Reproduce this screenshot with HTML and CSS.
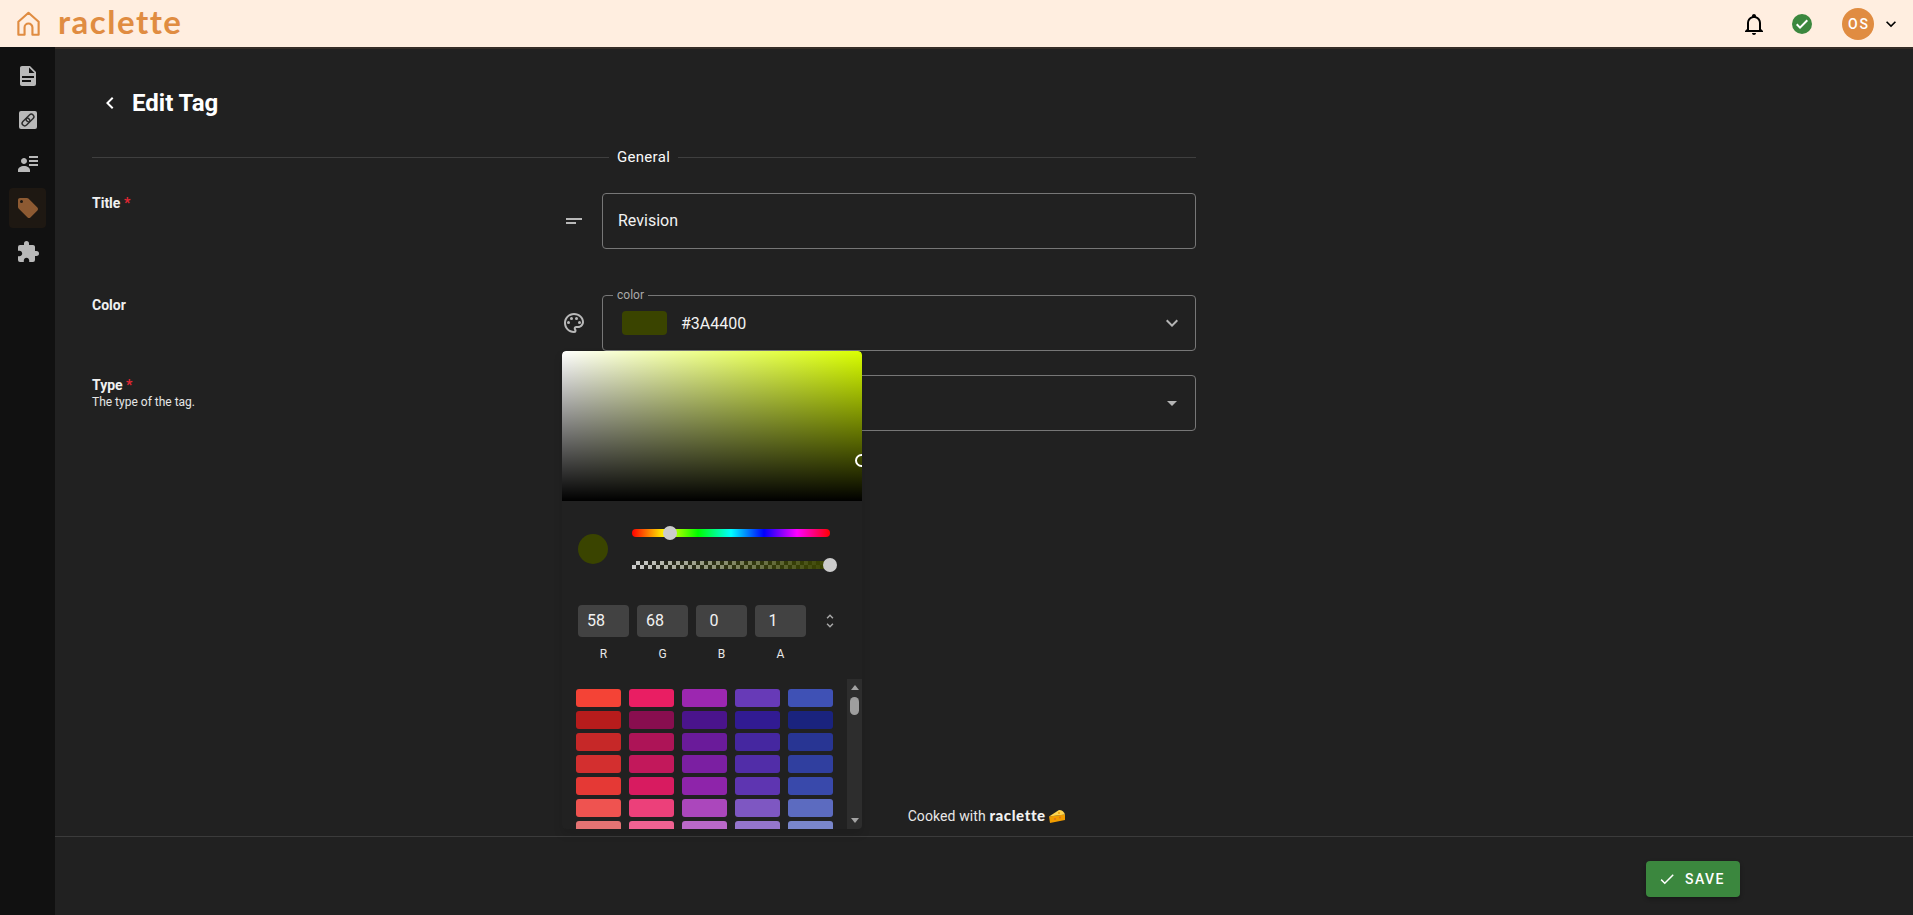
FILE: index.html
```html
<!DOCTYPE html>
<html>
<head>
    <meta charset="utf-8">
    <link rel="stylesheet" href="styles.css">
    <title>Edit Tag</title>
</head>
<body>
    <header class="topbar">
        <svg class="home-icon" viewBox="0 0 24 24"><path d="M3 22V10.500L12 2.500L21 10.500V22H15.500V15.500a3.500 3.500 0 0 0 -7 0V22Z"/></svg>
        <span class="logo">raclette</span>
        <div class="topbar-right">
            <svg class="icon bell" viewBox="0 0 24 24"><path d="M10 21H14C14 22.1 13.1 23 12 23S10 22.1 10 21M21 19V20H3V19L5 17V11C5 7.9 7 5.2 10 4.3V4C10 2.9 10.9 2 12 2S14 2.9 14 4V4.3C17 5.2 19 7.9 19 11V17L21 19M17 11C17 8.2 14.8 6 12 6S7 8.2 7 11V18H17V11Z"/></svg>
            <svg class="icon status" viewBox="0 0 24 24"><circle cx="12" cy="12" r="10" fill="#3b873e"/><path fill="#fff" d="M10 17L6 13L7.41 11.59L10 14.17L16.59 7.58L18 9L10 17Z"/></svg>
            <div class="avatar">OS</div>
            <svg class="icon caret" viewBox="0 0 24 24"><path d="M7.41,8.58L12,13.17L16.59,8.58L18,10L12,16L6,10L7.41,8.58Z"/></svg>
        </div>
    </header>

    <div class="shell">
        <nav class="sidebar">
            <a class="nav-item"><svg class="icon" viewBox="0 0 24 24"><path d="M13,9H18.5L13,3.5V9M6,2H14L20,8V20A2,2 0 0,1 18,22H6C4.89,22 4,21.1 4,20V4C4,2.89 4.89,2 6,2M15,18V16H6V18H15M18,14V12H6V14H18Z"/></svg></a>
            <a class="nav-item"><svg class="icon" viewBox="0 0 24 24"><path d="M5 3H19A2 2 0 0 1 21 5V19A2 2 0 0 1 19 21H5A2 2 0 0 1 3 19V5A2 2 0 0 1 5 3Z"/><g fill="none" stroke="#2a2a2a" stroke-width="1.4"><rect x="11.400" y="5.600" width="5.200" height="8.800" rx="2.600" transform="rotate(45 14 10)"/><rect x="7.400" y="9.600" width="5.200" height="8.800" rx="2.600" transform="rotate(45 10 14)"/></g></svg></a>
            <a class="nav-item"><svg class="icon" viewBox="0 0 24 24"><path d="M11 9C11 10.66 9.66 12 8 12C6.34 12 5 10.66 5 9C5 7.34 6.34 6 8 6C9.66 6 11 7.34 11 9M14 20H2V18C2 15.79 4.69 14 8 14C11.31 14 14 15.79 14 18M22 12V14H13V12M22 8V10H13V8M22 4V6H13V4Z"/></svg></a>
            <a class="nav-item active"><svg class="icon" viewBox="0 0 24 24"><path d="M5.5,7A1.5,1.5 0 0,1 4,5.5A1.5,1.5 0 0,1 5.5,4A1.5,1.5 0 0,1 7,5.5A1.5,1.5 0 0,1 5.5,7M21.41,11.58L12.41,2.58C12.05,2.22 11.55,2 11,2H4C2.89,2 2,2.89 2,4V11C2,11.55 2.22,12.05 2.59,12.41L11.58,21.41C11.95,21.77 12.45,22 13,22C13.55,22 14.05,21.77 14.41,21.41L21.41,14.41C21.78,14.05 22,13.55 22,13C22,12.44 21.77,11.94 21.41,11.58Z"/></svg></a>
            <a class="nav-item"><svg class="icon" viewBox="0 0 24 24"><path d="M20.5,11H19V7C19,5.89 18.1,5 17,5H13V3.5A2.5,2.5 0 0,0 10.5,1A2.5,2.5 0 0,0 8,3.5V5H4A2,2 0 0,0 2,7V10.8H3.5C5,10.8 6.2,12 6.2,13.5C6.2,15 5,16.2 3.5,16.2H2V20A2,2 0 0,0 4,22H7.8V20.5C7.8,19 9,17.8 10.5,17.8C12,17.8 13.2,19 13.2,20.5V22H17A2,2 0 0,0 19,20V16H20.5A2.5,2.5 0 0,0 23,13.5A2.5,2.5 0 0,0 20.5,11Z"/></svg></a>
        </nav>

        <main class="main">
            <div class="content">
                <div class="page-title">
                    <svg class="icon" viewBox="0 0 24 24"><path d="M15.41,16.58L10.83,12L15.41,7.41L14,6L8,12L14,18L15.41,16.58Z"/></svg>
                    <h1>Edit Tag</h1>
                </div>

                <div class="divider"><span>General</span></div>

                <div class="form-row row-title">
                    <div class="field-label">Title <b>*</b></div>
                    <div class="field">
                        <svg class="icon field-icon" viewBox="0 0 24 24"><path d="M4,9H20V11H4V9M4,13H14V15H4V13Z"/></svg>
                        <div class="box"><span>Revision</span></div>
                    </div>
                </div>

                <div class="form-row row-color">
                    <div class="field-label">Color</div>
                    <div class="field">
                        <svg class="icon field-icon" viewBox="0 0 24 24"><path d="M12 22C6.49 22 2 17.51 2 12S6.49 2 12 2s10 4.04 10 9c0 3.31-2.69 6-6 6h-1.77c-.28 0-.5.22-.5.5 0 .12.05.23.13.33.41.47.64 1.06.64 1.67A2.5 2.5 0 0 1 12 22zm0-18c-4.41 0-8 3.59-8 8s3.59 8 8 8c.28 0 .5-.22.5-.5a.54.54 0 0 0-.14-.35c-.41-.46-.63-1.05-.63-1.65a2.5 2.5 0 0 1 2.5-2.5H16c2.21 0 4-1.79 4-4 0-3.86-3.59-7-8-7z"/><circle cx="6.5" cy="11.5" r="1.5"/><circle cx="9.5" cy="7.5" r="1.5"/><circle cx="14.5" cy="7.5" r="1.5"/><circle cx="17.5" cy="11.5" r="1.5"/></svg>
                        <div class="box">
                            <span class="legend">color</span>
                            <i class="swatch"></i>
                            <span>#3A4400</span>
                            <svg class="icon box-end" viewBox="0 0 24 24"><path d="M7.41,8.58L12,13.17L16.59,8.58L18,10L12,16L6,10L7.41,8.58Z"/></svg>
                        </div>
                    </div>
                </div>

                <div class="form-row">
                    <div class="field-label">Type <b>*</b><small>The type of the tag.</small></div>
                    <div class="field">
                        <div class="field-icon"></div>
                        <div class="box">
                            <svg class="icon box-end" viewBox="0 0 24 24"><path d="M7,10L12,15L17,10H7Z"/></svg>
                        </div>
                    </div>
                </div>

                <p class="credit">Cooked with <span class="credit-logo">raclette</span> <svg class="cheese" viewBox="0 0 16 14"><path fill="#f09c00" d="M0 7.500L16 5.500V11L1 14Z"/><path fill="#ffd54f" d="M0 7.500L10 1c3 0 5.300 1.800 6 4.500Z"/><circle cx="6" cy="10" r="1.100" fill="#e2711d"/><circle cx="11" cy="8.500" r="1" fill="#e2711d"/><circle cx="10" cy="4" r=".9" fill="#f09c00"/></svg></p>
            </div>

            <footer class="actions">
                <button class="save-btn"><svg class="icon" viewBox="0 0 24 24"><path d="M21,7L9,19L3.500,13.500L4.910,12.090L9,16.170L19.590,5.590L21,7Z"/></svg>SAVE</button>
            </footer>
        </main>
    </div>

    <!-- colour picker menu, open over the form -->
    <div class="picker">
        <div class="sv-area"><i class="sv-dot"></i></div>

        <div class="picker-sliders">
            <div class="preview"></div>
            <div class="tracks">
                <div class="track hue"><i class="thumb thumb-hue"></i></div>
                <div class="track alpha"><i class="thumb thumb-alpha"></i></div>
            </div>
        </div>

        <div class="rgba">
            <div class="channel"><div class="channel-input">58</div><label>R</label></div>
            <div class="channel"><div class="channel-input">68</div><label>G</label></div>
            <div class="channel"><div class="channel-input">0</div><label>B</label></div>
            <div class="channel"><div class="channel-input">1</div><label>A</label></div>
            <svg class="icon unfold" viewBox="0 0 24 24"><path d="M12,18.170L8.830,15L7.410,16.410L12,21L16.590,16.410L15.170,15M12,5.830L15.170,9L16.580,7.590L12,3L7.410,7.590L8.830,9L12,5.830Z"/></svg>
        </div>

        <div class="palette">
            <div class="swatches">
                <i class="c-red"></i><i class="c-pink"></i><i class="c-purple"></i><i class="c-deep"></i><i class="c-indigo"></i>
                <i class="c-red-d4"></i><i class="c-pink-d4"></i><i class="c-purple-d4"></i><i class="c-deep-d4"></i><i class="c-indigo-d4"></i>
                <i class="c-red-d3"></i><i class="c-pink-d3"></i><i class="c-purple-d3"></i><i class="c-deep-d3"></i><i class="c-indigo-d3"></i>
                <i class="c-red-d2"></i><i class="c-pink-d2"></i><i class="c-purple-d2"></i><i class="c-deep-d2"></i><i class="c-indigo-d2"></i>
                <i class="c-red-d1"></i><i class="c-pink-d1"></i><i class="c-purple-d1"></i><i class="c-deep-d1"></i><i class="c-indigo-d1"></i>
                <i class="c-red-l1"></i><i class="c-pink-l1"></i><i class="c-purple-l1"></i><i class="c-deep-l1"></i><i class="c-indigo-l1"></i>
                <i class="c-red-l2"></i><i class="c-pink-l2"></i><i class="c-purple-l2"></i><i class="c-deep-l2"></i><i class="c-indigo-l2"></i>
            </div>
            <div class="scrollbar">
                <i class="arrow-up"></i>
                <i class="scroll-thumb"></i>
                <i class="arrow-down"></i>
            </div>
        </div>
    </div>
</body>
</html>
```

FILE: styles.css
```css
* {box-sizing: border-box;}
html, body {height: 100%;}
body {margin: 0; overflow: hidden; background: #212121; color: #fff; font-family: Roboto, "Liberation Sans", sans-serif; font-size: 14px;}
.icon {width: 24px; height: 24px; fill: currentColor; flex: none; display: block;}

/* top bar */
.topbar {height: 47px; background: #ffeee0; display: flex; align-items: center; padding: 0 12px 0 15px; color: #e08c41;}
.home-icon {width: 27px; height: 27px; fill: none; stroke: #e08c41; stroke-width: 1.9; stroke-linejoin: round;}
.logo {font-family: Lato, sans-serif; font-size: 33px; font-weight: 700; letter-spacing: 1.5px; margin-left: 16px; line-height: 47px; position: relative; top: -2px;}
.topbar-right {margin-left: auto; display: flex; align-items: center; color: #000;}
.status {margin-left: 24px;}
.avatar {width: 32px; height: 32px; border-radius: 50%; margin-left: 28px; background: #e08c41; color: #fff; font-weight: 500; letter-spacing: 2px; padding-left: 2px; display: flex; align-items: center; justify-content: center;}
.caret {width: 20px; height: 20px; margin-left: 7px;}

/* sidebar */
.shell {display: flex; height: 868px;}
.sidebar {width: 55px; flex: none; background: #111; padding: 9px 9px 0; display: flex; flex-direction: column; gap: 4px;}
.nav-item {width: 37px; height: 40px; border-radius: 4px; color: #b9b9b9; display: flex; align-items: center; justify-content: center;}
.nav-item.active {background: #1e1812; color: #8d5a32;}

/* main */
.main {flex: 1; min-width: 0; display: flex; flex-direction: column; box-shadow: inset 0 2px 0 #352d27;}
.content {flex: 1; display: flex; flex-direction: column; padding: 0 37px;}
.page-title {display: flex; align-items: center; gap: 10px; height: 56px; margin-top: 28px; padding-left: 6px; width: 1104px;}
.page-title h1 {margin: 0; font-size: 24px; font-weight: 700;}

.divider {width: 1104px; display: flex; align-items: center; gap: 8px; margin-top: 16px; height: 20px; font-size: 15px; color: #fafafa; letter-spacing: .3px;}
.divider::before {content: ""; width: 517px; height: 1px; background: #3f3f3f;}
.divider::after {content: ""; flex: 1; height: 1px; background: #3f3f3f;}

.form-row {width: 1104px; display: flex;}
.row-title {margin-top: 26px; margin-bottom: 46px;}
.row-title .box {padding-bottom: 2px;}
.row-color {margin-bottom: 24px;}
.field-label {width: 470px; padding-top: 1px; font-weight: 700; font-size: 14px; line-height: 18px; color: #f0f0f0;}
.field-label b {color: #e32733; font-weight: 700;}
.field-label small {display: block; margin-top: 1px; font-size: 12px; font-weight: 400; line-height: 14px; color: #e6e6e6;}
.field {flex: 1; display: flex; align-items: center; gap: 16px;}
.field-icon {width: 24px; height: 24px; flex: none; color: #b9b9b9;}
.box {flex: 1; height: 56px; border: 1px solid #777; border-radius: 4px; display: flex; align-items: center; padding: 0 11px 0 15px; font-size: 16px; color: #f2f2f2; position: relative;}
.box-end {margin-left: auto; color: #b5b5b5;}
.legend {position: absolute; left: 10px; top: -8px; padding: 0 4px; background: #212121; font-size: 12px; line-height: 14px; color: #aaa;}
.swatch {width: 45px; height: 24px; margin: 0 14px 0 4px; border-radius: 4px; background: #3a4400;}

.credit {margin: auto 0 11px; padding-left: 5px; text-align: center; width: 1784px; font-size: 14px; line-height: 18px; letter-spacing: .1px; color: #e8e8e8;}
.credit-logo {font-family: Lato, sans-serif; font-size: 15px; font-weight: 900; letter-spacing: .6px; color: #f2f2f2;}
.cheese {width: 16px; height: 14px; vertical-align: -2px;}

.actions {height: 79px; flex: none; border-top: 1px solid #3b3b3b; display: flex; align-items: center; justify-content: flex-end; padding: 6px 173px 0 0;}
.save-btn {width: 94px; height: 36px; border: 0; border-radius: 4px; background: #3b873e; color: #fff; font-family: Roboto, sans-serif; font-size: 14px; font-weight: 500; letter-spacing: 1.4px; display: flex; align-items: center; padding: 0 0 0 12px; gap: 9px; box-shadow: 0 2px 4px rgba(0,0,0,.3);}
.save-btn .icon {width: 18px; height: 18px;}

/* colour picker */
.picker {position: absolute; left: 562px; top: 351px; width: 300px; height: 478px; background: #212121; border-radius: 4px; overflow: hidden; box-shadow: 0 5px 10px rgba(0,0,0,.12);}
.sv-area {height: 150px; position: relative; overflow: hidden; border-radius: 4px 4px 0 0; background: linear-gradient(to top, #000, transparent), linear-gradient(to right, #fff, #daff00);}
.sv-dot {position: absolute; left: 293px; top: 103px; width: 13px; height: 13px; border: 2px solid #fff; border-radius: 50%;}

.picker-sliders {display: flex; align-items: center; padding: 28px 32px 0 16px; gap: 24px;}
.preview {width: 30px; height: 30px; border-radius: 50%; background: #3a4400;}
.tracks {flex: 1; display: flex; flex-direction: column; gap: 24px;}
.track {height: 8px; position: relative;}
.hue {border-radius: 4px; background: linear-gradient(to right, #f00, #ff0 16.66%, #0f0 33.33%, #0ff 50%, #00f 66.66%, #f0f 83.33%, #f00);}
.alpha {background: linear-gradient(to right, transparent, #3a4400), repeating-conic-gradient(#ccc 0 25%, transparent 0 50%) 0 0 / 8px 8px;}
.thumb {position: absolute; top: -3px; width: 14px; height: 14px; border-radius: 50%; background: #ccc;}
.thumb-hue {left: 31px;}
.thumb-alpha {left: 191px;}

.rgba {display: flex; gap: 8px; padding: 36px 0 0 16px;}
.channel {width: 51px; text-align: center;}
.channel-input {height: 32px; line-height: 32px; padding-right: 15px; border-radius: 4px; background: #424242; font-size: 16px; color: #f2f2f2;}
.channel label {display: block; margin-top: 10px; font-size: 12px; line-height: 14px; color: #e8e8e8;}
.unfold {width: 18px; height: 18px; margin: 7px 0 0 7px; color: #aaa;}

.palette {position: absolute; left: 0; right: 0; bottom: 0; height: 150px; overflow: hidden; display: flex; justify-content: space-between;}
.swatches {padding: 10px 0 0 14px; display: grid; grid-template-columns: repeat(5, 45px); grid-auto-rows: 18px; column-gap: 8px; row-gap: 4px;}
.swatches i {border-radius: 3px;}
.scrollbar {width: 15px; background: #2d2d2d; display: flex; flex-direction: column; align-items: center; padding-top: 6px; position: relative;}
.arrow-up {width: 0; height: 0; border: 4.5px solid transparent; border-top: 0; border-bottom: 5px solid #a3a3a3;}
.arrow-down {position: absolute; bottom: 6px; width: 0; height: 0; border: 4.5px solid transparent; border-bottom: 0; border-top: 5px solid #a3a3a3;}
.scroll-thumb {width: 9px; height: 18px; margin-top: 7px; border-radius: 5px; background: #9e9e9e;}

.c-red {background: #f44336;} .c-pink {background: #e91e63;} .c-purple {background: #9c27b0;} .c-deep {background: #673ab7;} .c-indigo {background: #3f51b5;}
.c-red-d4 {background: #b71c1c;} .c-pink-d4 {background: #880e4f;} .c-purple-d4 {background: #4a148c;} .c-deep-d4 {background: #311b92;} .c-indigo-d4 {background: #1a237e;}
.c-red-d3 {background: #c62828;} .c-pink-d3 {background: #ad1457;} .c-purple-d3 {background: #6a1b9a;} .c-deep-d3 {background: #4527a0;} .c-indigo-d3 {background: #283593;}
.c-red-d2 {background: #d32f2f;} .c-pink-d2 {background: #c2185b;} .c-purple-d2 {background: #7b1fa2;} .c-deep-d2 {background: #512da8;} .c-indigo-d2 {background: #303f9f;}
.c-red-d1 {background: #e53935;} .c-pink-d1 {background: #d81b60;} .c-purple-d1 {background: #8e24aa;} .c-deep-d1 {background: #5e35b1;} .c-indigo-d1 {background: #3949ab;}
.c-red-l1 {background: #ef5350;} .c-pink-l1 {background: #ec407a;} .c-purple-l1 {background: #ab47bc;} .c-deep-l1 {background: #7e57c2;} .c-indigo-l1 {background: #5c6bc0;}
.c-red-l2 {background: #e57373;} .c-pink-l2 {background: #f06292;} .c-purple-l2 {background: #ba68c8;} .c-deep-l2 {background: #9575cd;} .c-indigo-l2 {background: #7986cb;}
```
